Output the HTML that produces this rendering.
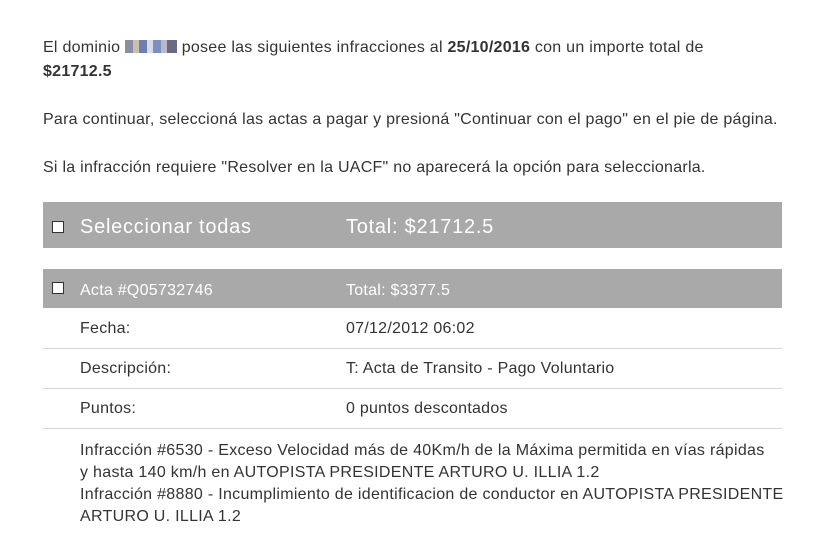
<!DOCTYPE html>
<html><head><meta charset="utf-8"><style>
body{margin:0;background:#fff;font-family:"Liberation Sans",sans-serif;color:#333;font-size:16px;letter-spacing:0.26px;width:827px;height:548px;overflow:hidden;position:relative}
.p{position:absolute;left:43px;line-height:22px;white-space:nowrap}
b{font-weight:bold}
.bar{position:absolute;left:43px;width:739px;background:#a9a9a9;color:#fff}
.cb{position:absolute;left:9px;width:10px;height:10px;border:1px solid #333;background:#fff}
.row{position:absolute;left:43px;width:739px;height:40px;border-bottom:1px solid #d5d5d5}
.l{position:absolute;left:37px;top:12px}
.r{position:absolute;left:303px;top:12px}
.px{display:inline-block;width:52px;height:13px;vertical-align:-1px;background:linear-gradient(90deg,#8a8fa0 0 8px,#c8c0b0 8px 14px,#6c7fb0 14px 22px,#d8d8e8 22px 28px,#7a90c0 28px 36px,#b8b8c8 36px 42px,#6a6a80 42px 52px)}
</style></head><body>
<div class="p" style="top:37px">El dominio <span class="px"></span> posee las siguientes infracciones al <b>25/10/2016</b> con un importe total de</div>
<div class="p" style="top:61px"><b>$21712.5</b></div>
<div class="p" style="top:109px">Para continuar, seleccioná las actas a pagar y presioná "Continuar con el pago" en el pie de página.</div>
<div class="p" style="top:157px">Si la infracción requiere "Resolver en la UACF" no aparecerá la opción para seleccionarla.</div>
<div class="bar" style="top:202px;height:46px;font-size:20px;letter-spacing:0.75px">
<div class="cb" style="top:19px"></div>
<div style="position:absolute;left:37px;top:14px">Seleccionar todas</div>
<div style="position:absolute;left:303px;top:14px">Total: $21712.5</div>
</div>
<div class="bar" style="top:269px;height:39px">
<div class="cb" style="top:13px"></div>
<div style="position:absolute;left:37px;top:13px">Acta #Q05732746</div>
<div style="position:absolute;left:303px;top:13px">Total: $3377.5</div>
</div>
<div class="row" style="top:308px"><div class="l">Fecha:</div><div class="r">07/12/2012 06:02</div></div>
<div class="row" style="top:348px"><div class="l">Descripción:</div><div class="r">T: Acta de Transito - Pago Voluntario</div></div>
<div class="row" style="top:388px"><div class="l">Puntos:</div><div class="r">0 puntos descontados</div></div>
<div class="p" style="top:440px;left:80px;letter-spacing:0.3px">Infracción #6530 - Exceso Velocidad más de 40Km/h de la Máxima permitida en vías rápidas<br>y hasta 140 km/h en AUTOPISTA PRESIDENTE ARTURO U. ILLIA 1.2<br>Infracción #8880 - Incumplimiento de identificacion de conductor en AUTOPISTA PRESIDENTE<br>ARTURO U. ILLIA 1.2</div>
</body></html>
